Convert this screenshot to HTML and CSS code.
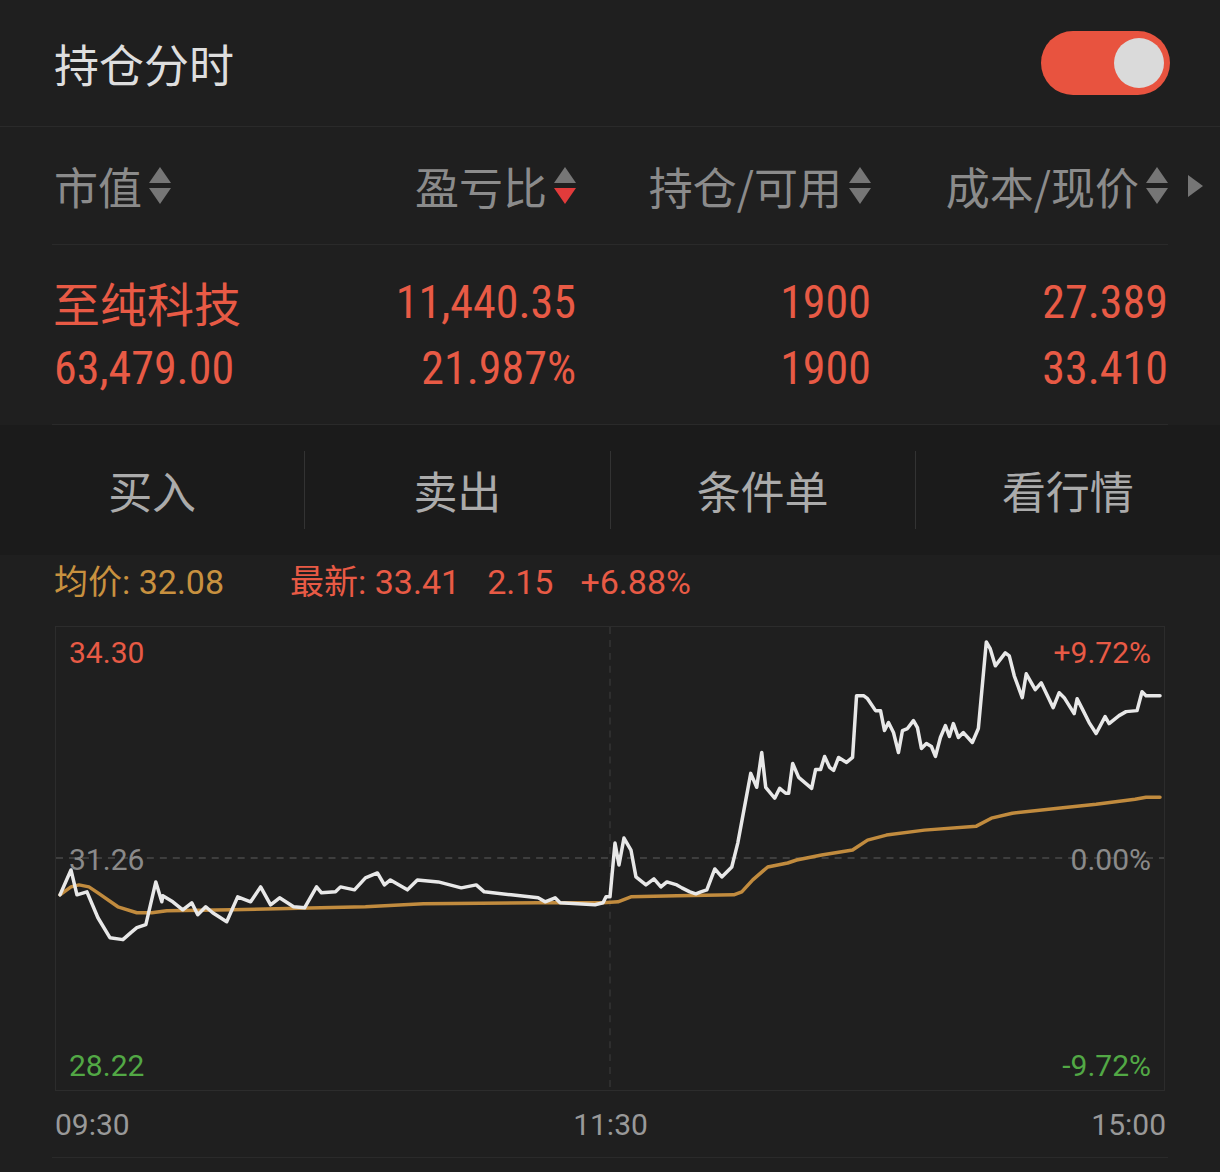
FILE: index.html
```html
<!DOCTYPE html>
<html lang="zh-CN">
<head>
<meta charset="utf-8">
<title>持仓分时</title>
<link rel="stylesheet" href="styles.css">
</head>
<body>
<header class="topbar">
  <div class="title">持仓分时</div>
  <div class="toggle"><span class="knob"></span></div>
</header>

<section class="table">
  <div class="thead">
    <div class="th th-left">市值<svg class="sort" viewBox="0 0 22 38" width="22" height="38"><polygon points="11,0 22,16 0,16" fill="#767676"/><polygon points="0,21 22,21 11,37" fill="#767676"/></svg></div>
    <div class="th">盈亏比<svg class="sort" viewBox="0 0 22 38" width="22" height="38"><polygon points="11,0 22,16 0,16" fill="#767676"/><polygon points="0,21 22,21 11,37" fill="#e23b3b"/></svg></div>
    <div class="th">持仓/可用<svg class="sort" viewBox="0 0 22 38" width="22" height="38"><polygon points="11,0 22,16 0,16" fill="#767676"/><polygon points="0,21 22,21 11,37" fill="#767676"/></svg></div>
    <div class="th">成本/现价<svg class="sort" viewBox="0 0 22 38" width="22" height="38"><polygon points="11,0 22,16 0,16" fill="#767676"/><polygon points="0,21 22,21 11,37" fill="#767676"/></svg></div>
    <div class="th-more"><svg viewBox="0 0 15 22" width="15" height="22"><polygon points="0,0 15,11 0,22" fill="#767676"/></svg></div>
  </div>
  <div class="tbody">
    <div class="tr">
      <div class="td td-left name">至纯科技</div>
      <div class="td num">11,440.35</div>
      <div class="td num">1900</div>
      <div class="td num">27.389</div>
    </div>
    <div class="tr">
      <div class="td td-left num">63,479.00</div>
      <div class="td num">21.987%</div>
      <div class="td num">1900</div>
      <div class="td num">33.410</div>
    </div>
  </div>
</section>

<nav class="actions">
  <div class="action">买入</div>
  <div class="action">卖出</div>
  <div class="action">条件单</div>
  <div class="action">看行情</div>
</nav>

<div class="stats">
  <span class="avg">均价: 32.08</span>
  <span class="latest">最新: 33.41</span>
  <span class="latest chg">2.15</span>
  <span class="latest chg">+6.88%</span>
</div>

<div class="chart">
  <svg class="plot" viewBox="55 626 1110 465" width="1110" height="465" preserveAspectRatio="none">
    <line x1="55" y1="858" x2="1165" y2="858" stroke="#4a4a4a" stroke-width="1.5" stroke-dasharray="7 6"/>
    <line x1="610" y1="626" x2="610" y2="1091" stroke="#343434" stroke-width="1.5" stroke-dasharray="7 6"/>
    <polyline fill="none" stroke="#c18b3e" stroke-width="3.5" stroke-linejoin="round" stroke-linecap="round"
      points="59,895 70,887 78,885 88,887 97,893 117,907 136,913 151,913 166,911 231,910 365,907 423,904 538,903 603,903 618,902 631,897 677,896 734,895 742,892 753,880 768,867 788,863 797,860 822,855 853,850 868,840 887,835 925,830 977,826 992,818 1013,813 1059,808 1097,804 1136,799 1147,797 1161,797"/>
    <polyline fill="none" stroke="#e8e8e8" stroke-width="3.5" stroke-linejoin="round" stroke-linecap="round"
      points="59,895 70,870 76,895 86,892 97,918 109,938 122,940 130,933 136,928 145,925 155,882 161,902 162,896 172,902 182,910 191,903 197,915 205,907 212,913 226,922 237,897 250,902 260,887 270,905 279,898 293,907 304,908 316,887 321,893 335,892 340,887 354,890 365,878 377,873 384,885 390,880 407,890 417,880 438,882 461,888 476,885 484,892 511,895 538,898 545,902 555,898 560,903 595,905 603,903 606,897 610,897 615,843 619,865 624,838 631,850 636,877 646,885 654,879 661,887 667,882 677,885 682,888 690,892 696,894 701,892 707,890 715,869 722,877 732,867 738,843 751,773 757,787 762,752 766,787 775,798 780,788 786,793 789,793 793,763 799,777 812,788 816,769 821,769 825,756 830,767 834,770 839,757 847,762 853,757 857,695 864,695 868,698 876,710 881,710 885,730 889,722 894,732 899,752 903,730 908,728 914,720 918,727 922,748 927,743 932,746 936,756 941,737 946,725 950,736 954,723 959,737 964,732 973,742 979,728 987,641 991,648 996,665 1006,652 1010,655 1015,675 1023,697 1027,673 1036,689 1042,682 1054,707 1060,692 1065,697 1075,713 1078,698 1083,708 1090,722 1097,733 1106,716 1110,723 1120,715 1127,711 1138,710 1143,691 1147,695 1161,695"/>
  </svg>
  <span class="lbl lbl-l lbl-top up">34.30</span>
  <span class="lbl lbl-l lbl-mid flat">31.26</span>
  <span class="lbl lbl-l lbl-bot down">28.22</span>
  <span class="lbl lbl-r lbl-top up">+9.72%</span>
  <span class="lbl lbl-r lbl-mid flat">0.00%</span>
  <span class="lbl lbl-r lbl-bot down">-9.72%</span>
</div>

<div class="timeaxis">
  <span>09:30</span>
  <span>11:30</span>
  <span>15:00</span>
</div>
</body>
</html>
```

FILE: styles.css
```css
html, body {
  margin: 0;
  padding: 0;
}
body {
  width: 1220px;
  min-height: 1172px;
  background: #1f1f1f;
  font-family: Roboto, "Noto Sans CJK SC", sans-serif;
  overflow: hidden;
}

.topbar {
  height: 127px;
  box-sizing: border-box;
  padding: 0 50px 0 54px;
  display: flex;
  align-items: center;
  justify-content: space-between;
  border-bottom: 1px solid #2a2a2a;
}
.title {
  font-family: "Noto Sans CJK SC", sans-serif;
  font-size: 45px;
  color: #dedede;
  line-height: 1;
}
.toggle {
  width: 129px;
  height: 64px;
  box-sizing: border-box;
  border-radius: 32px;
  background: #e8533f;
  display: flex;
  align-items: center;
  justify-content: flex-end;
  padding-right: 6px;
}
.knob {
  width: 50px;
  height: 50px;
  border-radius: 50%;
  background: #dadada;
}

.table {
  padding: 0 52px;
}
.thead {
  display: grid;
  grid-template-columns: 229px 295px 295px 297px 52px;
  margin-right: -52px;
  height: 117px;
  align-items: center;
}
.th {
  display: flex;
  align-items: center;
  justify-content: flex-end;
  gap: 7px;
  font-family: "Noto Sans CJK SC", sans-serif;
  font-size: 44px;
  color: #8b8b8b;
  line-height: 1;
}
.th-left {
  justify-content: flex-start;
  padding-left: 2px;
}
.sort {
  display: block;
  flex: none;
}
.th-more {
  display: flex;
  align-items: center;
  padding-left: 20px;
}
.th-more svg {
  display: block;
}
.tbody {
  border-top: 1px solid #2a2a2a;
  border-bottom: 1px solid #2a2a2a;
  padding: 24px 0 23px;
}
.tr {
  display: grid;
  grid-template-columns: 229px 295px 295px 297px;
  height: 66px;
  align-items: center;
}
.td {
  text-align: right;
  color: #e85a45;
  font-size: 46px;
  line-height: 66px;
  white-space: nowrap;
}
.td-left {
  text-align: left;
  padding-left: 2px;
}
.name {
  font-family: "Noto Sans CJK SC", sans-serif;
  font-size: 47px;
  padding-left: 1px;
}
.num {
  font-family: "Roboto Condensed", Roboto, sans-serif;
}

.actions {
  display: flex;
  align-items: center;
  height: 130px;
  background: #1b1b1b;
}
.action {
  flex: 1;
  height: 78px;
  display: flex;
  align-items: center;
  justify-content: center;
  font-family: "Noto Sans CJK SC", sans-serif;
  font-size: 44px;
  color: #ababab;
}
.action + .action {
  border-left: 1px solid #333;
}

.stats {
  height: 48px;
  padding: 3px 0 0 54px;
  display: flex;
  align-items: center;
  font-size: 34px;
  line-height: 48px;
  white-space: nowrap;
}
.avg {
  color: #c8913f;
}
.latest {
  color: #e85a45;
  margin-left: 66px;
}
.latest.chg {
  margin-left: 27px;
}

.chart {
  position: relative;
  margin: 20px 55px 0;
  width: 1110px;
  height: 465px;
  box-sizing: border-box;
  border: 1px solid #2c2c2c;
}
.plot {
  display: block;
  width: 100%;
  height: 100%;
}
.lbl {
  position: absolute;
  font-size: 30px;
  line-height: 30px;
  white-space: nowrap;
}
.lbl-l { left: 13px; }
.lbl-r { right: 13px; }
.lbl-top { top: 11px; }
.lbl-mid { top: 218px; }
.lbl-bot { top: 424px; }
.up { color: #e85a45; }
.flat { color: #8a8a8a; }
.down { color: #52a845; }

.timeaxis {
  margin: 0 52px;
  height: 66px;
  padding: 0 2px 0 3px;
  display: flex;
  align-items: center;
  justify-content: space-between;
  border-bottom: 1px solid #2a2a2a;
  font-size: 30px;
  color: #999;
}
```
